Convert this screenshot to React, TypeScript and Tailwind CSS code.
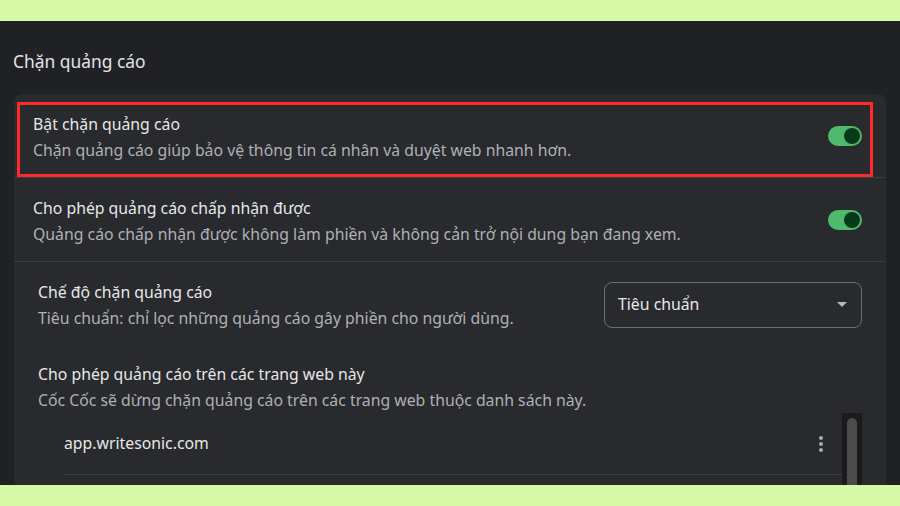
import React from "react";

const FONT = { fontFamily: '"Noto Sans", "Open Sans", sans-serif' };

function Toggle() {
  return (
    <div className="relative w-[34px] h-[20px] rounded-full bg-[#4ebb6c] shrink-0">
      <div className="absolute right-[2px] top-[2px] w-[16px] h-[16px] rounded-full bg-[#05391a]" />
    </div>
  );
}

function ToggleRow({ title, desc, highlight }: { title: string; desc: string; highlight?: boolean }) {
  return (
    <div className="relative flex items-center justify-between h-[84px] pl-[19px] pr-[24px] border-b border-[#3b3c3f]">
      <div className="flex flex-col pt-[3px]">
        <span className="text-[15.8px] leading-[22px] text-[#e6e7e9]">{title}</span>
        <span className="text-[15.8px] leading-[22px] mt-[4px] text-[#aeb1b6]">{desc}</span>
      </div>
      <Toggle />
      {highlight && (
        <div className="absolute left-[3px] top-[8px] right-[13px] bottom-0 border-[3px] border-[#ff2b2b] pointer-events-none" />
      )}
    </div>
  );
}

export default function App() {
  return (
    <div className="w-[900px] h-[506px] bg-[#d8f9a8] flex flex-col overflow-hidden" style={FONT}>
      <div className="h-[21px] shrink-0" />

      {/* ── Settings panel ─────────────────────────────────────────── */}
      <div className="h-[464px] bg-[#202124] overflow-hidden pl-[14px] pr-[14px] pt-[28px]">
        <h2 className="text-[17.4px] leading-[24px] text-[#e3e4e6] ml-[-1px]">Chặn quảng cáo</h2>

        <div className="mt-[21px] rounded-t-[8px] bg-[#292a2d]">
          <ToggleRow
            highlight
            title="Bật chặn quảng cáo"
            desc="Chặn quảng cáo giúp bảo vệ thông tin cá nhân và duyệt web nhanh hơn."
          />
          <ToggleRow
            title="Cho phép quảng cáo chấp nhận được"
            desc="Quảng cáo chấp nhận được không làm phiền và không cản trở nội dung bạn đang xem."
          />

          <div className="pl-[24px] pr-[24px] pt-[19px]">
            {/* Mode */}
            <div className="flex items-center justify-between">
              <div className="flex flex-col">
                <span className="text-[15.8px] leading-[22px] text-[#e6e7e9]">Chế độ chặn quảng cáo</span>
                <span className="text-[15.8px] leading-[22px] mt-[4px] text-[#aeb1b6]">
                  Tiêu chuẩn: chỉ lọc những quảng cáo gây phiền cho người dùng.
                </span>
              </div>
              <div className="w-[258px] h-[46px] rounded-[8px] border border-[#6b6d70] flex items-center justify-between pl-[13px] pr-[14px]">
                <span className="text-[15.8px] text-[#e6e7e9]">Tiêu chuẩn</span>
                <svg width="10" height="6" viewBox="0 0 10 6">
                  <path d="M0 0 L10 0 L5 5 Z" fill="#b5b8bc" />
                </svg>
              </div>
            </div>

            {/* Allowed sites */}
            <div className="flex flex-col mt-[34px]">
              <span className="text-[15.8px] leading-[22px] text-[#e6e7e9]">Cho phép quảng cáo trên các trang web này</span>
              <span className="text-[15.8px] leading-[22px] mt-[4px] text-[#aeb1b6]">
                Cốc Cốc sẽ dừng chặn quảng cáo trên các trang web thuộc danh sách này.
              </span>
            </div>

            <div className="flex ml-[26px] mt-[2px]">
              <div className="flex-1">
                <div className="flex items-center justify-between h-[62px] pr-[19px] border-b border-[#3b3c3f]">
                  <span className="text-[15.8px] text-[#e6e7e9]">app.writesonic.com</span>
                  <div className="flex flex-col gap-[2px]">
                    <span className="w-[4px] h-[4px] rounded-full bg-[#a9acb0]" />
                    <span className="w-[4px] h-[4px] rounded-full bg-[#a9acb0]" />
                    <span className="w-[4px] h-[4px] rounded-full bg-[#a9acb0]" />
                  </div>
                </div>
              </div>
              <div className="w-[20px] h-[120px] bg-[#1a1b1a] pt-[5px] flex justify-center">
                <div className="w-[10px] h-[110px] rounded-full bg-[#4a4c4a]" />
              </div>
            </div>
          </div>
        </div>
      </div>

      <div className="h-[21px] shrink-0" />
    </div>
  );
}
